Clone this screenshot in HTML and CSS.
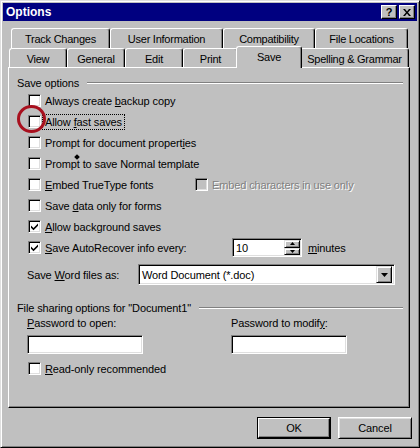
FILE: index.html
```html
<!DOCTYPE html>
<html>
<head>
<meta charset="utf-8">
<link rel="stylesheet" href="styles.css">
</head>
<body>
<div class="window">
  <div class="titlebar">
    <span class="title">Options</span>
    <div class="tbtns">
      <span class="tbtn help">?</span>
      <span class="tbtn close"><svg width="8" height="7" viewBox="0 0 8 7"><path d="M0 0h2l2 2.5L6 0h2L5 3.5 8 7H6L4 4.5 2 7H0l3-3.5z" fill="#000"/></svg></span>
    </div>
  </div>

  <div class="tabrow back">
    <div class="tab" style="width:99px">Track Changes</div>
    <div class="tab" style="width:113px">User Information</div>
    <div class="tab" style="width:92px">Compatibility</div>
    <div class="tab" style="width:93px">File Locations</div>
  </div>
  <div class="tabrow front">
    <div class="tab" style="width:58px">View</div>
    <div class="tab" style="width:58px">General</div>
    <div class="tab" style="width:58px">Edit</div>
    <div class="tab" style="width:55px">Print</div>
    <div class="tab selected" style="width:66px">Save</div>
    <div class="tab" style="width:109px">Spelling &amp; Grammar</div>
  </div>

  <div class="panel">
    <div class="grouphead"><span>Save options</span><span class="etch"></span></div>

    <div class="cb-row"><span class="cb"></span><span class="lbl">Always create <u>b</u>ackup copy</span></div>
    <div class="cb-row"><span class="cb"></span><span class="lbl focus">Allow <u>f</u>ast saves</span></div>
    <div class="cb-row"><span class="cb"></span><span class="lbl">Prompt for document propert<u>i</u>es</span></div>
    <div class="cb-row"><span class="cb"></span><span class="lbl">Prompt to save Normal template</span></div>
    <div class="cb-row">
      <div class="cell w-embed"><span class="cb"></span><span class="lbl"><u>E</u>mbed TrueType fonts</span></div>
      <div class="cell"><span class="cb disabled"></span><span class="lbl dis">Embed characters in use only</span></div>
    </div>
    <div class="cb-row"><span class="cb"></span><span class="lbl">Save <u>d</u>ata only for forms</span></div>
    <div class="cb-row"><span class="cb checked"><svg width="9" height="9" viewBox="0 0 9 9"><path d="M1 3.5l2.5 2.5L8 1.5v2.2L3.5 8.2 1 5.7z" fill="#000"/></svg></span><span class="lbl"><u>A</u>llow background saves</span></div>
    <div class="cb-row">
      <div class="cell w-auto"><span class="cb checked"><svg width="9" height="9" viewBox="0 0 9 9"><path d="M1 3.5l2.5 2.5L8 1.5v2.2L3.5 8.2 1 5.7z" fill="#000"/></svg></span><span class="lbl"><u>S</u>ave AutoRecover info every:</span></div>
      <div class="spinner">
        <span class="spin-val">10</span>
        <div class="spin-btns">
          <span class="spin-btn"><svg width="5" height="3" viewBox="0 0 5 3"><path d="M2.5 0L5 3H0z" fill="#000"/></svg></span>
          <span class="spin-btn"><svg width="5" height="3" viewBox="0 0 5 3"><path d="M0 0h5L2.5 3z" fill="#000"/></svg></span>
        </div>
      </div>
      <span class="lbl minutes"><u>m</u>inutes</span>
    </div>

    <div class="combo-row">
      <span class="combo-lbl">Save <u>W</u>ord files as:</span>
      <div class="combo">
        <span class="combo-val">Word Document (*.doc)</span>
        <span class="combo-btn"><svg width="7" height="4" viewBox="0 0 7 4"><path d="M0 0h7L3.5 4z" fill="#000"/></svg></span>
      </div>
    </div>

    <div class="grouphead share"><span>File sharing options for "Document1"</span><span class="etch"></span></div>
    <div class="pw-grid">
      <span class="pw-lbl"><u>P</u>assword to open:</span>
      <span class="pw-lbl">Password to modif<u>y</u>:</span>
      <span class="field"></span>
      <span class="field"></span>
    </div>
    <div class="cb-row ro"><span class="cb"></span><span class="lbl"><u>R</u>ead-only recommended</span></div>
  </div>

  <div class="actions">
    <div class="btn default"><span>OK</span></div>
    <div class="btn">Cancel</div>
  </div>

  <div class="ring"></div>
  <div class="cursor-dot"></div>
</div>
</body>
</html>
```

FILE: styles.css
```css
html, body {
  margin: 0;
  padding: 0;
  background: #c0c0c0;
}
body {
  font-family: "Liberation Sans", Arial, sans-serif;
  font-size: 11px;
  letter-spacing: -0.12px;
  color: #000;
}
u { text-decoration: underline; text-underline-offset: 1px; }

.window {
  position: relative;
  width: 420px;
  height: 448px;
  box-sizing: border-box;
  background: #c0c0c0;
  border: 1px solid;
  border-color: #dfdfdf #000 #000 #dfdfdf;
  box-shadow: inset 1px 1px 0 #fff, inset -1px -1px 0 #808080;
  padding: 2px;
  display: flex;
  flex-direction: column;
}

.titlebar {
  height: 18px;
  background: #000080;
  display: flex;
  align-items: center;
  justify-content: space-between;
  padding: 0 2px 0 3px;
  flex: none;
}
.title {
  color: #fff;
  font-weight: bold;
  font-size: 12px;
  letter-spacing: 0;
}
.tbtns { display: flex; gap: 2px; }
.tbtn {
  width: 16px;
  height: 14px;
  box-sizing: border-box;
  background: #c0c0c0;
  border: 1px solid;
  border-color: #fff #000 #000 #fff;
  box-shadow: inset -1px -1px 0 #808080;
  display: flex;
  align-items: center;
  justify-content: center;
  font-weight: bold;
  font-size: 11px;
  line-height: 1;
}

.tabrow {
  display: flex;
  height: 20px;
  flex: none;
}
.tabrow.back { margin-top: 7px; margin-left: 8px; }
.tabrow.front { margin-left: 6px; height: 19px; }
.tab {
  box-sizing: border-box;
  height: 20px;
  border-top: 1px solid #fff;
  border-left: 1px solid #fff;
  border-right: 1px solid #000;
  box-shadow: inset -1px 0 0 #808080;
  border-radius: 3px 3px 0 0;
  display: flex;
  align-items: center;
  justify-content: center;
  padding-top: 1px;
  white-space: nowrap;
  background: #c0c0c0;
  letter-spacing: -0.25px;
}
.front .tab { height: 19px; }
.front .tab.selected {
  position: relative;
  z-index: 2;
  height: 22px;
  margin: -2px -2px 0 -2px;
  padding-top: 0;
  padding-bottom: 2px;
}

.panel {
  flex: none;
  height: 341px;
  width: 402px;
  margin-left: 5px;
  box-sizing: border-box;
  border: 1px solid;
  border-color: #fff #000 #000 #fff;
  box-shadow: inset -1px -1px 0 #808080;
  padding: 8px 6px 0 8px;
  display: flex;
  flex-direction: column;
}

.grouphead {
  height: 14px;
  display: flex;
  align-items: center;
  flex: none;
}
.etch {
  flex: 1;
  margin-left: 8px;
  height: 0;
  border-top: 1px solid #808080;
  border-bottom: 1px solid #fff;
}
.grouphead.share { margin-top: 16px; }

.cb-row {
  height: 21px;
  display: flex;
  align-items: center;
  padding-left: 11px;
  flex: none;
}
.cell { display: flex; align-items: center; }
.w-embed { width: 167px; }
.w-auto { width: 204px; }

.cb {
  width: 13px;
  height: 13px;
  box-sizing: border-box;
  background: #fff;
  border: 1px solid;
  border-color: #808080 #fff #fff #808080;
  box-shadow: inset 1px 1px 0 #000, inset -1px -1px 0 #dfdfdf;
  display: inline-flex;
  align-items: center;
  justify-content: center;
  flex: none;
}
.cb.disabled { background: #c0c0c0; }
.lbl { margin-left: 4px; white-space: nowrap; }
.lbl.focus {
  margin-left: 3px;
  padding: 0 1px;
  outline: 1px dotted #000;
  outline-offset: 1px;
}
.lbl.dis {
  color: #808080;
  text-shadow: 1px 1px 0 #fff;
}

.spinner {
  width: 70px;
  height: 19px;
  box-sizing: border-box;
  background: #fff;
  border: 1px solid;
  border-color: #808080 #fff #fff #808080;
  box-shadow: inset 1px 1px 0 #000, inset -1px -1px 0 #dfdfdf;
  display: flex;
  align-items: center;
  justify-content: space-between;
  padding: 1px 1px 1px 3px;
}
.spin-btns {
  display: flex;
  flex-direction: column;
  width: 16px;
  height: 15px;
}
.spin-btn {
  flex: 1;
  box-sizing: border-box;
  background: #c0c0c0;
  border: 1px solid;
  border-color: #dfdfdf #000 #000 #dfdfdf;
  box-shadow: inset 1px 1px 0 #fff, inset -1px -1px 0 #808080;
  display: flex;
  align-items: center;
  justify-content: center;
}
.minutes { margin-left: 6px; }

.combo-row {
  margin-top: 6px;
  height: 21px;
  display: flex;
  align-items: center;
  padding-left: 10px;
  flex: none;
}
.combo-lbl { width: 111px; white-space: nowrap; }
.combo {
  width: 257px;
  height: 21px;
  box-sizing: border-box;
  background: #fff;
  border: 1px solid;
  border-color: #808080 #fff #fff #808080;
  box-shadow: inset 1px 1px 0 #000, inset -1px -1px 0 #dfdfdf;
  display: flex;
  align-items: center;
  justify-content: space-between;
  padding: 2px 2px 2px 3px;
}
.combo-btn {
  width: 16px;
  height: 17px;
  box-sizing: border-box;
  background: #c0c0c0;
  border: 1px solid;
  border-color: #dfdfdf #000 #000 #dfdfdf;
  box-shadow: inset 1px 1px 0 #fff, inset -1px -1px 0 #808080;
  display: flex;
  align-items: center;
  justify-content: center;
}

.pw-grid {
  margin-top: 2px;
  padding-left: 10px;
  display: grid;
  grid-template-columns: 204px 1fr;
  grid-template-rows: 13px 19px;
  row-gap: 5px;
  flex: none;
}
.pw-lbl { line-height: 13px; white-space: nowrap; }
.field {
  width: 116px;
  height: 19px;
  box-sizing: border-box;
  background: #fff;
  border: 1px solid;
  border-color: #808080 #fff #fff #808080;
  box-shadow: inset 1px 1px 0 #000, inset -1px -1px 0 #dfdfdf;
}
.cb-row.ro { margin-top: 4px; }

.actions {
  margin-top: 9px;
  display: flex;
  justify-content: flex-end;
  gap: 7px;
  padding-right: 5px;
  flex: none;
}
.btn {
  width: 74px;
  height: 22px;
  box-sizing: border-box;
  background: #c0c0c0;
  border: 1px solid;
  border-color: #fff #000 #000 #fff;
  box-shadow: inset 1px 1px 0 #dfdfdf, inset -1px -1px 0 #808080;
  display: flex;
  align-items: center;
  justify-content: center;
}
.btn.default {
  border: 1px solid #000;
  box-shadow: none;
  padding: 0;
}
.btn.default span {
  width: 100%;
  height: 100%;
  box-sizing: border-box;
  border: 1px solid;
  border-color: #fff #000 #000 #fff;
  box-shadow: inset -1px -1px 0 #808080;
  display: flex;
  align-items: center;
  justify-content: center;
}

.ring {
  position: absolute;
  left: 16px;
  top: 104px;
  width: 29px;
  height: 28px;
  box-sizing: border-box;
  border: 3px solid #a8101e;
  border-radius: 50%;
}
.cursor-dot {
  position: absolute;
  left: 74px;
  top: 154px;
  width: 4px;
  height: 4px;
  background: #000;
  transform: rotate(45deg);
}
```
